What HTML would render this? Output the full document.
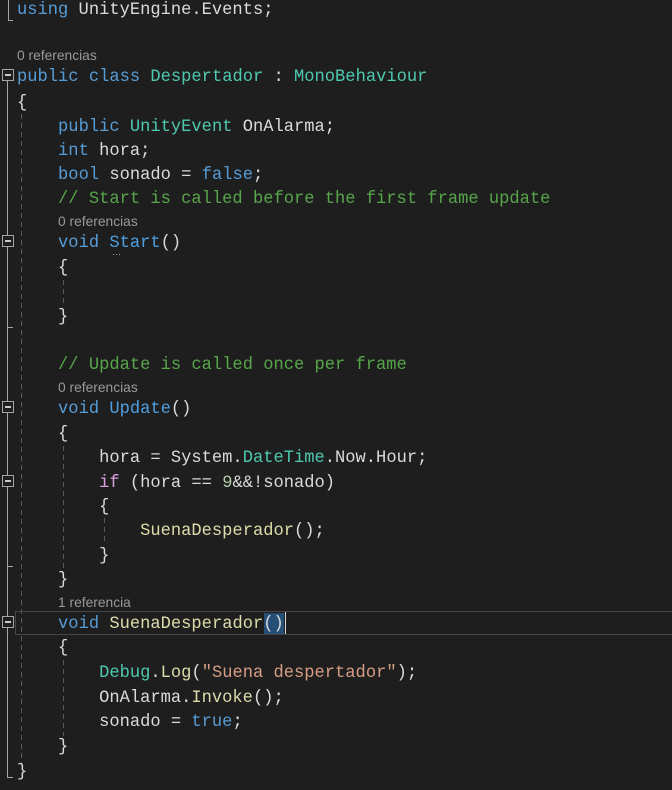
<!DOCTYPE html>
<html><head><meta charset="utf-8"><style>
html,body{margin:0;padding:0;background:#1e1e1e;width:672px;height:790px;overflow:hidden;position:relative}
.l{position:absolute;left:17px;height:24px;line-height:24px;font-family:"Liberation Mono",monospace;font-size:17.1px;color:#dadada;white-space:pre;margin-top:3px}
.c{position:absolute;height:16px;line-height:16px;font-family:"Liberation Sans",sans-serif;font-size:13.8px;color:#999;white-space:pre}
.k{color:#569cd6}.t{color:#4ec9b0}.g{color:#57a64a}.m{color:#dcdcaa}.s{color:#d69d85}.p{color:#d8a0df}.n{color:#b5cea8}.u{color:#4e9fe0}
.box{position:absolute;left:2px;width:10px;height:10px;border:1px solid #a5a5a5;background:#1e1e1e}
.box:after{content:"";position:absolute;left:2px;top:4px;width:6px;height:2px;background:#c8c8c8}
.v{position:absolute;left:7px;width:1px;background:#a5a5a5}
.h{position:absolute;left:7px;width:6px;height:1px;background:#a5a5a5}
.gd{position:absolute;width:1px;background:repeating-linear-gradient(#5a5a5a 0 5px,transparent 5px 9px)}
</style></head><body>
<div class="v" style="top:0;height:20px;left:8px"></div><div class="h" style="top:20px;left:8px;width:5px"></div>
<div class="l" style="top:-4px;left:17px"><span class="k">using</span> UnityEngine.Events;</div>
<div class="c" style="top:48px;left:17px">0 referencias</div>
<div class="box" style="top:69px"></div>
<div class="l" style="top:63px"><span class="k">public</span> <span class="k">class</span> <span class="t">Despertador</span> : <span class="t">MonoBehaviour</span></div>
<div class="v" style="top:81px;height:697px"></div>
<div class="h" style="top:777px"></div>
<div class="l" style="top:89px">{</div>
<div class="gd" style="left:21px;top:114px;height:650px"></div>
<div class="l" style="top:113px">    <span class="k">public</span> <span class="t">UnityEvent</span> OnAlarma;</div>
<div class="l" style="top:137px">    <span class="k">int</span> hora;</div>
<div class="l" style="top:161px">    <span class="k">bool</span> sonado = <span class="k">false</span>;</div>
<div class="l" style="top:185px">    <span class="g">// Start is called before the first frame update</span></div>
<div class="c" style="top:214px;left:58px">0 referencias</div>
<div class="box" style="top:235px"></div>
<div class="l" style="top:229px">    <span class="k">void</span> <span class="u">Start</span>()</div>
<div style="position:absolute;left:112px;top:251px;color:#aaa;font-size:9px;line-height:6px;font-family:'Liberation Sans'">···</div>
<div class="l" style="top:254px">    {</div>
<div class="gd" style="left:63px;top:280px;height:26px"></div>
<div class="l" style="top:303px">    }</div>
<div class="h" style="top:327px"></div>
<div class="l" style="top:351px">    <span class="g">// Update is called once per frame</span></div>
<div class="c" style="top:380px;left:58px">0 referencias</div>
<div class="box" style="top:401px"></div>
<div class="l" style="top:395px">    <span class="k">void</span> <span class="u">Update</span>()</div>
<div class="l" style="top:420px">    {</div>
<div class="gd" style="left:63px;top:446px;height:122px"></div>
<div class="l" style="top:444px">        hora = System.<span class="t">DateTime</span>.Now.Hour;</div>
<div class="box" style="top:475px"></div>
<div class="l" style="top:469px">        <span class="p">if</span> (hora == <span class="n">9</span>&amp;&amp;!sonado)</div>
<div class="l" style="top:493px">        {</div>
<div class="gd" style="left:104px;top:518px;height:26px"></div>
<div class="l" style="top:517px">            <span class="m">SuenaDesperador</span>();</div>
<div class="l" style="top:542px">        }</div>
<div class="h" style="top:566px"></div>
<div class="l" style="top:566px">    }</div>
<div class="c" style="top:595px;left:58px">1 referencia</div>
<div style="position:absolute;left:15px;top:611px;width:660px;height:22px;border:1px solid #464646;border-right:none"></div>
<div class="box" style="top:616px"></div>
<div style="position:absolute;left:264px;top:613px;width:20px;height:21px;background:#264f78"></div>
<div style="position:absolute;left:285px;top:612px;width:1px;height:22px;background:#dadada"></div>
<div class="l" style="top:610px">    <span class="k">void</span> <span class="m">SuenaDesperador</span>()</div>
<div class="l" style="top:634px">    {</div>
<div class="gd" style="left:63px;top:660px;height:76px"></div>
<div class="l" style="top:659px">        <span class="t">Debug</span>.<span class="m">Log</span>(<span class="s">"Suena despertador"</span>);</div>
<div class="l" style="top:684px">        OnAlarma.<span class="m">Invoke</span>();</div>
<div class="l" style="top:708px">        sonado = <span class="k">true</span>;</div>
<div class="l" style="top:733px">    }</div>
<div class="l" style="top:758px">}</div>
</body></html>
